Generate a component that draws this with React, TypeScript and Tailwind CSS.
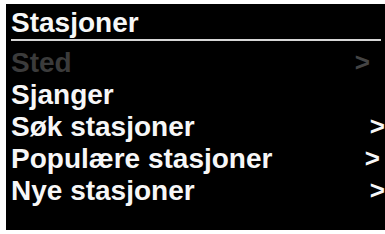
const items = [
  { label: 'Sted', dim: true, chevron: 'mr-[15px] text-[#444444]' },
  { label: 'Sjanger', dim: false, chevron: '' },
  { label: 'Søk stasjoner', dim: false, chevron: 'mr-0' },
  { label: 'Populære stasjoner', dim: false, chevron: 'mr-[5px]' },
  { label: 'Nye stasjoner', dim: false, chevron: 'mr-0' },
];

export default function App() {
  return (
    <div className="w-[385px] h-[234px] bg-white pt-[4px] pl-[6px]">
      <div
        className="h-[226px] bg-black overflow-hidden pl-[5px] pt-[3px] text-[#f7f7f7] font-bold text-[28px]"
        style={{ fontFamily: '"Liberation Sans", Arial, sans-serif' }}
      >
        <div className="leading-[32px] border-b-2 border-[#d6d6d6] mr-[4px]">Stasjoner</div>
        <div className="mt-[6px] flex flex-col">
          {items.map((it) => (
            <div key={it.label} className="flex justify-between items-center h-[32px] leading-[32px]">
              <span className={it.dim ? 'text-[#3b3b3b]' : ''}>{it.label}</span>
              {it.chevron && <span className={`${it.chevron} text-[26px] pb-[2px]`}>&gt;</span>}
            </div>
          ))}
        </div>
      </div>
    </div>
  );
}
